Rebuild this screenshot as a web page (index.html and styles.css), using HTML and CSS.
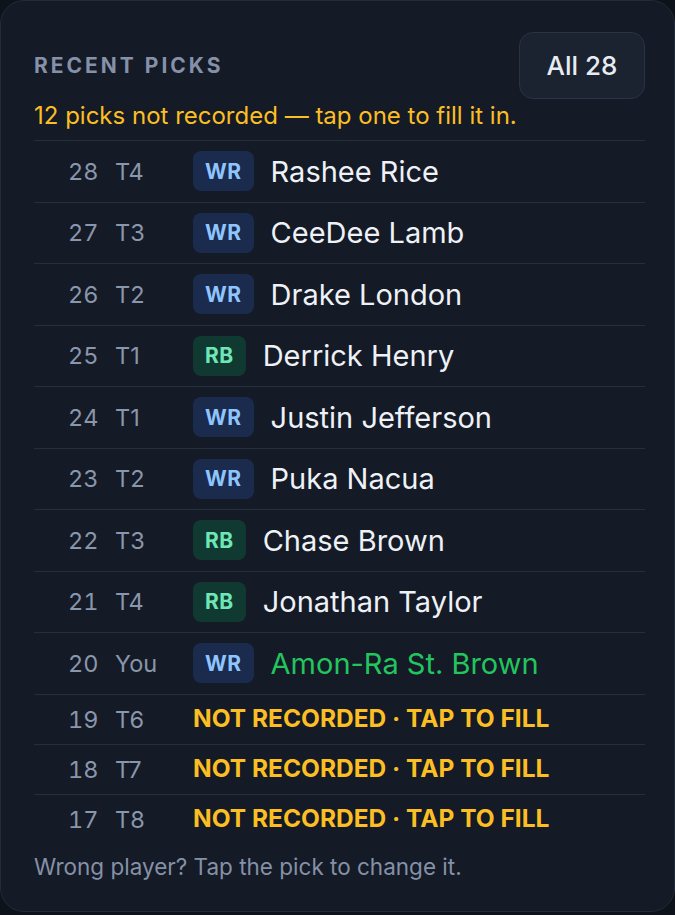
FILE: index.html
```html
<!DOCTYPE html>
<html lang="en">
<head>
<meta charset="utf-8">
<title>Recent Picks</title>
<link rel="stylesheet" href="styles.css">
</head>
<body>
<section class="card">
  <header class="head">
    <h2 class="title">RECENT PICKS</h2>
    <button class="all-btn">All 28</button>
  </header>
  <p class="warn">12 picks not recorded — tap one to fill it in.</p>
  <ul class="list">
    <li class="row"><span class="num">28</span><span class="team">T4</span><span class="badge wr">WR</span><span class="name">Rashee Rice</span></li>
    <li class="row"><span class="num">27</span><span class="team">T3</span><span class="badge wr">WR</span><span class="name">CeeDee Lamb</span></li>
    <li class="row"><span class="num">26</span><span class="team">T2</span><span class="badge wr">WR</span><span class="name">Drake London</span></li>
    <li class="row"><span class="num">25</span><span class="team">T1</span><span class="badge rb">RB</span><span class="name">Derrick Henry</span></li>
    <li class="row"><span class="num">24</span><span class="team">T1</span><span class="badge wr">WR</span><span class="name">Justin Jefferson</span></li>
    <li class="row"><span class="num">23</span><span class="team">T2</span><span class="badge wr">WR</span><span class="name">Puka Nacua</span></li>
    <li class="row"><span class="num">22</span><span class="team">T3</span><span class="badge rb">RB</span><span class="name">Chase Brown</span></li>
    <li class="row"><span class="num">21</span><span class="team">T4</span><span class="badge rb">RB</span><span class="name">Jonathan Taylor</span></li>
    <li class="row"><span class="num">20</span><span class="team">You</span><span class="badge wr">WR</span><span class="name mine">Amon-Ra St. Brown</span></li>
    <li class="row empty"><span class="num">19</span><span class="team">T6</span><span class="missing">NOT RECORDED · TAP TO FILL</span></li>
    <li class="row empty"><span class="num">18</span><span class="team">T7</span><span class="missing">NOT RECORDED · TAP TO FILL</span></li>
    <li class="row empty"><span class="num">17</span><span class="team">T8</span><span class="missing">NOT RECORDED · TAP TO FILL</span></li>
  </ul>
  <p class="foot">Wrong player? Tap the pick to change it.</p>
</section>
</body>
</html>
```
FILE: styles.css
```css
* { box-sizing: border-box; }
html, body {
  margin: 0;
  padding: 0;
  background: #0e121a;
}
body {
  font-family: Inter, "Noto Sans", "Liberation Sans", sans-serif;
  color: #e8ecf2;
}
.card {
  width: 675px;
  border: 1px solid #232b39;
  border-radius: 24px;
  background: #141a26;
  padding: 31px 29px 32px 33px;
}
.head {
  display: flex;
  justify-content: space-between;
  align-items: center;
}
.title {
  margin: 0;
  font-size: 21px;
  font-weight: 700;
  letter-spacing: 3px;
  color: #8491a8;
}
.all-btn {
  width: 126px;
  height: 67px;
  border: 1.5px solid #2a3344;
  border-radius: 14px;
  background: #1b2230;
  color: #e8ecf2;
  font-family: inherit;
  font-size: 26px;
  font-weight: 500;
}
.warn {
  margin: 4px 0 11px;
  font-size: 24px;
  line-height: 26px;
  color: #fbbf24;
}
.list {
  list-style: none;
  margin: 0;
  padding: 0;
}
.row {
  display: flex;
  align-items: center;
  border-top: 1.5px solid #252e3d;
  padding: 10px 0;
  min-height: 61.5px;
}
.row.empty {
  padding: 9px 0;
  min-height: 50px;
}
.num {
  width: 81px;
  padding-left: 34px;
  font-size: 23.5px;
  font-variant-numeric: tabular-nums;
  color: #8a96ab;
}
.team {
  width: 78px;
  font-size: 23.5px;
  color: #8a96ab;
}
.badge {
  display: inline-flex;
  align-items: center;
  justify-content: center;
  height: 40px;
  padding: 0 12px;
  border-radius: 8px;
  font-size: 21px;
  font-weight: 700;
  letter-spacing: 0.5px;
  margin-right: 17px;
}
.badge.wr { background: #1a2b4d; color: #8ec5ff; }
.badge.rb { background: #103a31; color: #6ee7b7; }
.name {
  font-size: 29px;
  font-weight: 400;
  color: #eef1f6;
}
.name.mine { color: #22c55e; }
.missing {
  font-size: 24.5px;
  line-height: 1.2;
  font-weight: 700;
  color: #fbbf24;
}
.foot {
  margin: 11px 0 0;
  font-size: 22.5px;
  line-height: 24px;
  color: #8591a6;
}
```
